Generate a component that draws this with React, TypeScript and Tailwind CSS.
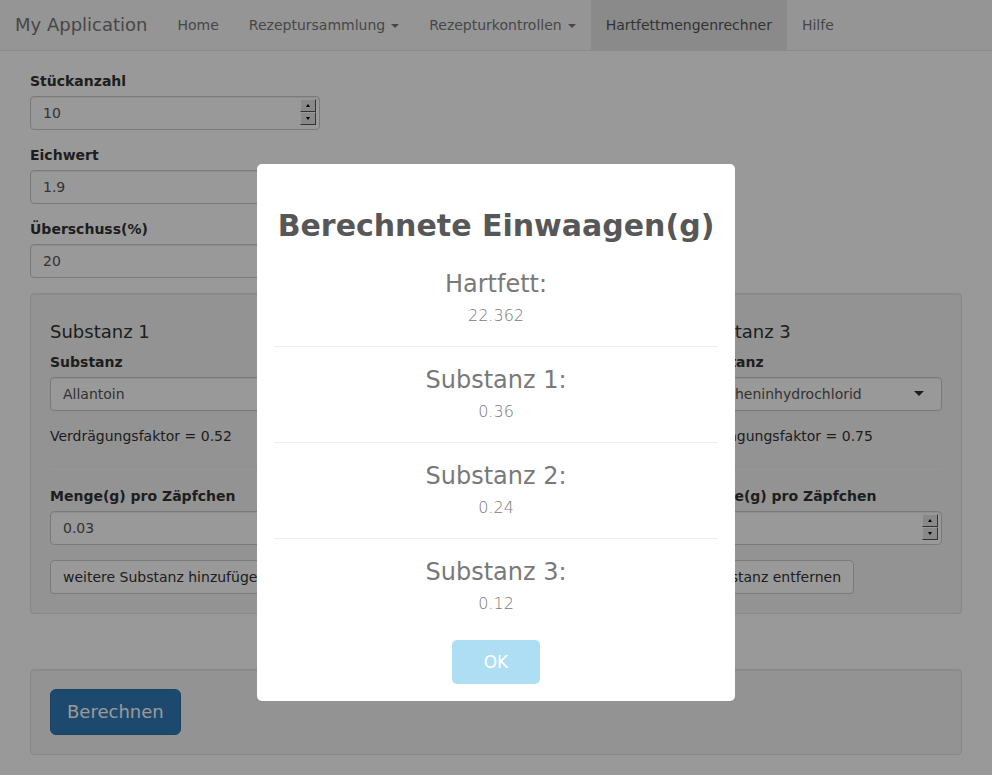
import type { ReactNode } from 'react';

const navItems = [
  { label: 'Home' },
  { label: 'Rezeptursammlung', dropdown: true },
  { label: 'Rezepturkontrollen', dropdown: true },
  { label: 'Hartfettmengenrechner', active: true },
  { label: 'Hilfe' },
];

const substances = [
  { title: 'Substanz 1', name: 'Allantoin', factor: '0.52', amount: '0.03', add: true, spinner: false },
  { title: 'Substanz 2', name: 'Bismutgallat', factor: '0.67', amount: '0.02', add: true, spinner: false },
  { title: 'Substanz 3', name: 'Adipheninhydrochlorid', factor: '0.75', amount: '0.01', add: false, spinner: true },
];

const results = [
  { label: 'Hartfett:', value: '22.362' },
  { label: 'Substanz 1:', value: '0.36' },
  { label: 'Substanz 2:', value: '0.24' },
  { label: 'Substanz 3:', value: '0.12' },
];

function Caret() {
  return (
    <span className="ml-[6px] inline-block h-0 w-0 align-middle border-t-[4px] border-x-[4px] border-t-current border-x-transparent" />
  );
}

function SpinButton({ up }: { up?: boolean }) {
  return (
    <div className="flex h-[13px] w-[16px] items-center justify-center border border-t-white border-l-white border-b-[#555] border-r-[#555] bg-[#e4e4e4]">
      {up ? (
        <span className="h-0 w-0 border-b-[3px] border-x-[2.5px] border-b-black border-x-transparent" />
      ) : (
        <span className="h-0 w-0 border-t-[3px] border-x-[2.5px] border-t-black border-x-transparent" />
      )}
    </div>
  );
}

function Input({ value, spinner, className }: { value: string; spinner?: boolean; className?: string }) {
  return (
    <div
      className={`relative flex h-[34px] items-center rounded-[4px] border border-[#ccc] bg-white px-[12px] text-[#555] shadow-[inset_0_1px_1px_rgba(0,0,0,0.075)] ${className ?? 'w-full'}`}
    >
      {value}
      {spinner && (
        <div className="absolute right-[3px] top-[2px] flex flex-col">
          <SpinButton up />
          <SpinButton />
        </div>
      )}
    </div>
  );
}

function Label({ children }: { children: ReactNode }) {
  return <label className="mb-[5px] block font-bold leading-[20px]">{children}</label>;
}

function Select({ value }: { value: string }) {
  return (
    <div className="flex h-[34px] w-full items-center justify-between overflow-hidden whitespace-nowrap rounded-[4px] border border-[#ccc] bg-white pl-[12px] pr-[17px] text-[#555] shadow-[inset_0_1px_1px_rgba(0,0,0,0.075)]">
      <span>{value}</span>
      <svg width="10" height="5" viewBox="0 0 10 5" className="shrink-0">
        <path d="M0 0h10L5 5z" fill="#333" />
      </svg>
    </div>
  );
}

function Button({ children }: { children: ReactNode }) {
  return (
    <button className="h-[34px] whitespace-nowrap rounded-[4px] border border-[#ccc] bg-white px-[12px] leading-[20px] text-[#333]">
      {children}
    </button>
  );
}

function Well({ children, className }: { children: ReactNode; className?: string }) {
  return (
    <div
      className={`rounded-[4px] border border-[#e3e3e3] bg-[#f5f5f5] p-[19px] shadow-[inset_0_1px_1px_rgba(0,0,0,0.05)] ${className ?? ''}`}
    >
      {children}
    </div>
  );
}

export default function App() {
  return (
    <div className="relative min-h-[775px] bg-white font-['DejaVu_Sans',sans-serif] text-[14px] leading-[20px] text-[#333]">
      <nav className="flex h-[51px] border-b border-[#e7e7e7] bg-[#f8f8f8]">
        <a className="block h-[50px] p-[15px] text-[18px] leading-[20px] text-[#777]">My Application</a>
        <ul className="flex">
          {navItems.map((item) => (
            <li key={item.label}>
              <a
                className={`block h-[50px] p-[15px] leading-[20px] ${
                  item.active ? 'bg-[#e7e7e7] text-[#555]' : 'text-[#777]'
                }`}
              >
                {item.label}
                {item.dropdown && <Caret />}
              </a>
            </li>
          ))}
        </ul>
      </nav>

      <main className="px-[30px] pt-[20px]">
        <div className="mb-[15px]">
          <Label>Stückanzahl</Label>
          <Input value="10" spinner className="w-[290px]" />
        </div>
        <div className="mb-[15px]">
          <Label>Eichwert</Label>
          <Input value="1.9" className="w-[290px]" />
        </div>
        <div className="mb-[15px]">
          <Label>Überschuss(%)</Label>
          <Input value="20" className="w-[290px]" />
        </div>

        <Well className="mb-[55px]">
          <div className="grid grid-cols-3 gap-[69.5px]">
            {substances.map((s) => (
              <div key={s.title}>
                <h4 className="mb-[10px] mt-[9px] text-[18px] leading-[1.1]">{s.title}</h4>
                <Label>Substanz</Label>
                <div className="mb-[15px]">
                  <Select value={s.name} />
                </div>
                <div>Verdrägungsfaktor = {s.factor}</div>
                <hr className="mb-[19px] mt-[20px] border-[#eee]" />
                <Label>Menge(g) pro Zäpfchen</Label>
                <div className="mb-[15px]">
                  <Input value={s.amount} spinner={s.spinner} />
                </div>
                <Button>{s.add ? 'weitere Substanz hinzufügen' : 'Substanz entfernen'}</Button>
              </div>
            ))}
          </div>
        </Well>

        <Well className="mb-[20px]">
          <button className="h-[46px] rounded-[6px] border border-[#2e6da4] bg-[#337ab7] px-[16px] text-[18px] leading-[24px] text-white">
            Berechnen
          </button>
        </Well>
      </main>

      <div className="fixed inset-0 bg-black/40" />

      <div className="fixed left-[257px] top-[164px] w-[478px] rounded-[5px] bg-white p-[17px] text-center">
        <h2 className="my-[25px] text-[30px] font-bold leading-[40px] text-[#575757]">Berechnete Einwaagen(g)</h2>
        <div className="text-[#797979]">
          {results.map((r, i) => (
            <div key={r.label}>
              {i > 0 && <hr className="my-[20px] border-[#eee]" />}
              <h3 className="mb-[10px] text-[24px] leading-[1.1]">{r.label}</h3>
              <p className="text-[16px] font-light leading-[18.5px]">{r.value}</p>
            </div>
          ))}
        </div>
        <button className="mx-[5px] mt-[26px] rounded-[5px] bg-[#aedef4] px-[32px] py-[10px] text-[17px] leading-[24.3px] text-white">
          OK
        </button>
      </div>
    </div>
  );
}
